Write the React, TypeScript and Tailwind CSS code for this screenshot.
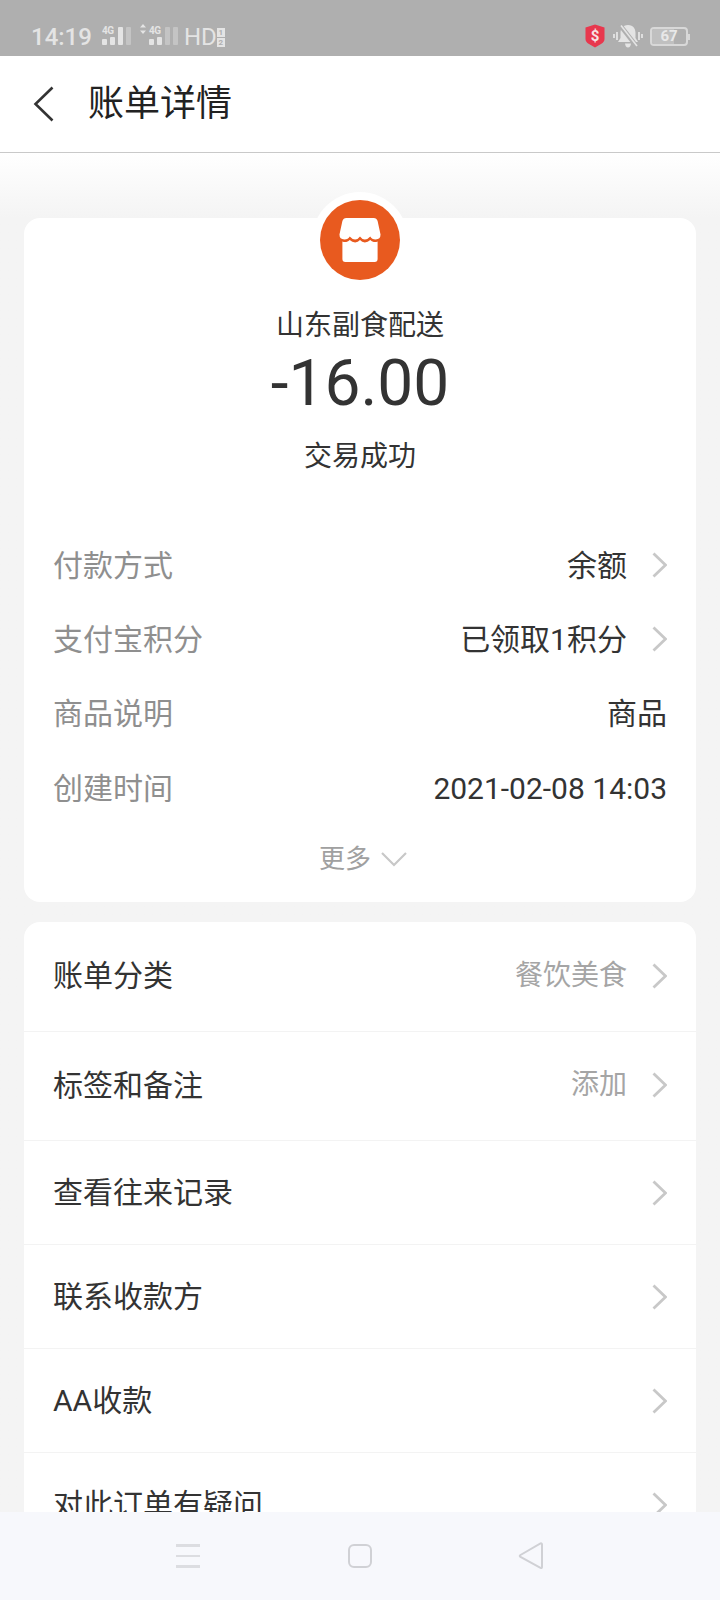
import React from 'react';

const Chevron: React.FC = () => (
  <svg width="16" height="26" viewBox="0 0 16 26" fill="none" className="shrink-0">
    <path d="M2.5 1.5 L14.5 13 L2.5 24.5" stroke="#c8c8c8" strokeWidth="2.8" />
  </svg>
);

// signal block: 4G label over the two low bars, the last bars can be dimmed
const Signal: React.FC<{ lit: number }> = ({ lit }) => (
  <div className="flex items-end gap-[3px] h-[18px]">
    <div className="flex flex-col items-start w-[13px]">
      <span className="text-[10px] leading-[9px] font-bold text-[#e4e4e4] tracking-[-0.3px]">4G</span>
      <div className="flex items-end gap-[3px] h-[9px] mt-[1px]">
        <div className="w-[5px] h-[6px] rounded-[1px] bg-[#e4e4e4]" />
        <div className="w-[5px] h-[8px] rounded-[1px] bg-[#e4e4e4]" />
      </div>
    </div>
    <div className={`w-[5px] h-[18px] rounded-[1px] ${lit > 2 ? 'bg-[#e4e4e4]' : 'bg-[#c4c4c4]'}`} />
    <div className="w-[5px] h-[18px] rounded-[1px] bg-[#c4c4c4]" />
  </div>
);

const StatusBar: React.FC = () => (
  <div className="h-[56px] shrink-0 bg-[#afafaf] flex items-end pb-[5px] pl-[31px] pr-[30px] text-[#e4e4e4]">
    <span className="text-[24px] leading-[28px] font-medium mr-[10px]">14:19</span>
    <div className="mb-[6px]">
      <Signal lit={3} />
    </div>
    <svg width="6" height="10" viewBox="0 0 6 10" className="ml-[9px] mr-[3px] mb-[17px]">
      <path d="M3 0 L6 3.5 H0 Z M3 10 L0 6.5 H6 Z" fill="#e4e4e4" />
    </svg>
    <div className="mb-[6px]">
      <Signal lit={2} />
    </div>
    <span className="text-[24px] leading-[28px] ml-[6px]">HD</span>
    <div className="flex flex-col gap-[1px] mb-[4px]">
      <span className="w-[8px] h-[9px] bg-[#e4e4e4] text-[#afafaf] text-[8px] leading-[9px] font-bold text-center">1</span>
      <span className="w-[8px] h-[9px] bg-[#e4e4e4] text-[#afafaf] text-[8px] leading-[9px] font-bold text-center">2</span>
    </div>
    <div className="flex-1" />
    <svg width="20" height="24" viewBox="0 0 20 24" className="mb-[3px] mr-[8px]">
      <path d="M10 0.5 L19.5 3.5 V15 Q19.5 18 16 20 L10 23.5 L4 20 Q0.5 18 0.5 15 V3.5 Z" fill="#e8374d" />
      <text x="10" y="17" textAnchor="middle" fontSize="15" fontWeight="700" fill="#f8e4e6">$</text>
    </svg>
    <svg width="30" height="24" viewBox="0 0 30 24" className="mb-[3px] mr-[7px]">
      <path d="M15 1 C9.5 1 7.5 5 7.5 9 V14 L5 18 H25 L22.5 14 V9 C22.5 5 20.5 1 15 1 Z M12 19.5 H18 Q17.5 23.5 15 23.5 Q12.5 23.5 12 19.5 Z" fill="#e4e4e4" />
      <path d="M7 1 L24 23" stroke="#afafaf" strokeWidth="4.5" />
      <path d="M8 1.5 L24 22" stroke="#e4e4e4" strokeWidth="1.6" />
      <path d="M1 10 V14 M4 8 V16 M26 8 V16 M29 10 V14" stroke="#e4e4e4" strokeWidth="1.8" />
    </svg>
    <div className="relative w-[38px] h-[19px] rounded-[4px] border-2 border-[#d8d8d8] mb-[5px] overflow-hidden">
      <div className="w-[22px] h-full bg-[#c0c0c0]" />
      <span className="absolute inset-0 text-center text-[15px] leading-[15px] font-bold text-[#e8e8e8]">67</span>
    </div>
    <div className="w-[2px] h-[6px] bg-[#d8d8d8] mb-[11px]" />
  </div>
);

const Header: React.FC = () => (
  <div className="h-[97px] shrink-0 bg-white border-b border-[#c9c9c9] flex items-center pl-[33px]">
    <svg width="21" height="36" viewBox="0 0 21 36" fill="none" className="mr-[34px]">
      <path d="M19.5 1.5 L2.5 18 L19.5 34.5" stroke="#333333" strokeWidth="2.6" />
    </svg>
    <h1 className="text-[36px] leading-[44px] font-normal text-[#222222]">账单详情</h1>
  </div>
);

const InfoRow: React.FC<{ label: string; value: string; arrow?: boolean }> = ({ label, value, arrow }) => (
  <div className="h-[74.3px] flex items-center justify-between">
    <span className="text-[30px] text-[#8f8f8f]">{label}</span>
    <div className="flex items-center gap-[24px]">
      <span className="text-[30px] text-[#333333]">{value}</span>
      {arrow && <Chevron />}
    </div>
  </div>
);

const LinkRow: React.FC<{ label: string; value?: string; className: string }> = ({ label, value, className }) => (
  <div className={`${className} shrink-0 border-b border-[#f3f3f3] px-[29px] flex items-center justify-between`}>
    <span className="text-[30px] text-[#333333]">{label}</span>
    <div className="flex items-center gap-[24px]">
      {value && <span className="text-[28px] text-[#a5a5a5]">{value}</span>}
      <Chevron />
    </div>
  </div>
);

const NavBar: React.FC = () => (
  <div className="h-[88px] shrink-0 bg-[#f7f8fc] flex items-center justify-center">
    <div className="w-[24px] flex flex-col gap-[8px] mr-[148px]">
      <div className="h-[2.5px] bg-[#dcdde1]" />
      <div className="h-[2.5px] bg-[#dcdde1]" />
      <div className="h-[2.5px] bg-[#dcdde1]" />
    </div>
    <div className="w-[24px] h-[24px] rounded-[6px] border-2 border-[#d0d1d5] mr-[146px]" />
    <svg width="26" height="28" viewBox="0 0 26 28" fill="none">
      <path d="M24 2.5 V25 Q24 26.5 22.5 25.8 L2.5 15 Q1 14 2.5 13 L22.5 1.5 Q24 1 24 2.5 Z" stroke="#d0d1d5" strokeWidth="2" />
    </svg>
  </div>
);

export default function App() {
  return (
    <div className="w-[720px] h-[1600px] flex flex-col overflow-hidden bg-[#f4f4f4] font-['Roboto','Noto_Sans_CJK_SC',sans-serif]">
      <StatusBar />
      <Header />
      <main className="flex-1 min-h-0 overflow-hidden px-[24px] pt-[65px] bg-gradient-to-b from-white to-[#f4f4f4] to-[65px]">
        {/* summary card */}
        <section className="relative bg-white rounded-[16px] h-[684px] px-[29px] pt-[90px]">
          <div className="absolute left-1/2 -translate-x-1/2 -top-[26px] w-[96px] h-[96px] rounded-full bg-white flex items-center justify-center">
            <div className="w-[80px] h-[80px] rounded-full bg-[#e85a1f] flex items-center justify-center">
              <svg width="44" height="44" viewBox="0 0 42 45">
                <path d="M7 0 H35 Q38 0 39 3 L42 17 Q42 22 37 22 Q33 22 31.5 19 Q29 22 26 22 Q23 22 21 19 Q19 22 16 22 Q13 22 10.5 19 Q9 22 5 22 Q0 22 0 17 L3 3 Q4 0 7 0 Z" fill="#ffffff" />
                <path d="M3 24 Q5 25 7 24.5 Q9 24 10.5 22.5 Q13 25 16 25 Q19 25 21 22.5 Q23 25 26 25 Q29 25 31.5 22.5 Q33 24 35 24.5 Q37 25 39 24 V42 Q39 45 36 45 H6 Q3 45 3 42 Z" fill="#ffffff" />
              </svg>
            </div>
          </div>
          <div className="flex flex-col items-center">
            <p className="text-[28px] leading-[40px] text-[#333333] mt-[-2px]">山东副食配送</p>
            <p className="text-[64px] leading-[76px] text-[#333333] mt-[0px]">-16.00</p>
            <p className="text-[28px] leading-[40px] text-[#333333] mt-[15px]">交易成功</p>
          </div>
          <div className="mt-[51px]">
            <InfoRow label="付款方式" value="余额" arrow />
            <InfoRow label="支付宝积分" value="已领取1积分" arrow />
            <InfoRow label="商品说明" value="商品" />
            <InfoRow label="创建时间" value="2021-02-08 14:03" />
          </div>
          <div className="flex items-center justify-center gap-[10px] mt-[16px] pl-[6px]">
            <span className="text-[26px] leading-[36px] text-[#a0a0a0]">更多</span>
            <svg width="26" height="16" viewBox="0 0 26 16" fill="none">
              <path d="M1 2 L13 14 L25 2" stroke="#c8c8c8" strokeWidth="2.2" />
            </svg>
          </div>
        </section>

        {/* actions card */}
        <section className="bg-white rounded-t-[16px] mt-[20px] flex flex-col">
          <LinkRow label="账单分类" value="餐饮美食" className="h-[110px] pb-[2px]" />
          <LinkRow label="标签和备注" value="添加" className="h-[109px] pb-[2px]" />
          <LinkRow label="查看往来记录" className="h-[104px]" />
          <LinkRow label="联系收款方" className="h-[104px]" />
          <LinkRow label="AA收款" className="h-[104px]" />
          <LinkRow label="对此订单有疑问" className="h-[104px]" />
        </section>
      </main>
      <NavBar />
    </div>
  );
}
